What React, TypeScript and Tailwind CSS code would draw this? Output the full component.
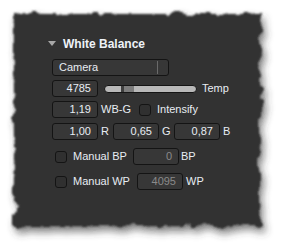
import React from "react";

function Field({ value, w = "w-[46px]", dim = false }: { value: string; w?: string; dim?: boolean }) {
  return (
    <div
      className={`${w} h-[17px] rounded-[3px] border border-[#141414] bg-[#373737] flex items-center justify-end pr-[6px] ${
        dim ? "text-[#8a8a8a]" : "text-[#e8edf3]"
      }`}
    >
      {value}
    </div>
  );
}

function Check() {
  return <div className="w-[12px] h-[12px] rounded-[3px] border border-[#141414] bg-[#303030]" />;
}

export default function App() {
  return (
    <div className="w-[282px] h-[247px] bg-white pt-[14px] pl-[14px] font-['Liberation_Sans',Arial,sans-serif] text-[11px] text-[#e8edf3]">
      <svg width="0" height="0" className="absolute">
        <filter id="torn" x="-10%" y="-10%" width="125%" height="125%">
          <feTurbulence type="fractalNoise" baseFrequency="0.07" numOctaves="4" seed="7" result="noise" />
          <feDisplacementMap in="SourceGraphic" in2="noise" scale="12" xChannelSelector="R" yChannelSelector="G" result="raw" />
          <feGaussianBlur in="raw" stdDeviation="1.1" result="shape" />
          <feGaussianBlur in="raw" stdDeviation="4" result="blur" />
          <feOffset in="blur" dx="3" dy="5" result="off" />
          <feComponentTransfer in="off" result="shadow">
            <feFuncA type="linear" slope="0.65" />
          </feComponentTransfer>
          <feMerge>
            <feMergeNode in="shadow" />
            <feMergeNode in="shape" />
          </feMerge>
        </filter>
      </svg>

      {/* panel */}
      <div className="relative w-[246px] h-[212px]">
        <div className="absolute inset-0 bg-[#333333] [filter:url(#torn)]" />

        <div className="relative pt-[22px] pl-[34px]">
          {/* header */}
          <div className="flex items-center h-[16px] gap-[7px]">
            <svg width="8" height="6" viewBox="0 0 8 6">
              <path d="M0 0 H8 L4 5 Z" fill="#a8a8a8" />
            </svg>
            <span className="font-bold text-[12px] text-[#eef2f8]">White Balance</span>
          </div>

          <div className="ml-[4px] mt-[7px] flex flex-col">
            {/* combo */}
            <div className="w-[117px] h-[17px] rounded-[3px] border border-[#141414] bg-[#373737] flex items-center">
              <span className="pl-[6px] flex-1">Camera</span>
              <div className="w-px h-[13px] bg-[#6a6a6a] mr-[10px]" />
            </div>

            {/* temp */}
            <div className="flex items-center mt-[4px] h-[17px]">
              <Field value="4785" />
              <div className="ml-[6px] w-[93px] h-[8px] rounded-full border border-[#141414] bg-[#b8b8b8] flex overflow-hidden">
                <div className="w-[16px]" />
                <div className="w-[3px] bg-[#3e3e3e]" />
                <div className="w-[10px] bg-[#7c7c7c]" />
              </div>
              <span className="ml-[5px]">Temp</span>
            </div>

            {/* wb-g */}
            <div className="flex items-center mt-[4px] h-[17px]">
              <Field value="1,19" />
              <span className="ml-[3px]">WB-G</span>
              <div className="ml-[8px]">
                <Check />
              </div>
              <span className="ml-[6px]">Intensify</span>
            </div>

            {/* rgb */}
            <div className="flex items-center mt-[5px] h-[17px]">
              <Field value="1,00" />
              <span className="ml-[3px] w-[12px]">R</span>
              <Field value="0,65" />
              <span className="ml-[3px] w-[12px]">G</span>
              <Field value="0,87" />
              <span className="ml-[3px]">B</span>
            </div>

            {/* BP */}
            <div className="flex items-center mt-[8px] h-[17px] pl-[3px]">
              <Check />
              <span className="ml-[6px] w-[60px]">Manual BP</span>
              <Field value="0" dim />
              <span className="ml-[2px]">BP</span>
            </div>

            {/* WP */}
            <div className="flex items-center mt-[8px] h-[17px] pl-[3px]">
              <Check />
              <span className="ml-[6px] w-[64px]">Manual WP</span>
              <Field value="4095" dim />
              <span className="ml-[3px]">WP</span>
            </div>
          </div>
        </div>
      </div>
    </div>
  );
}
